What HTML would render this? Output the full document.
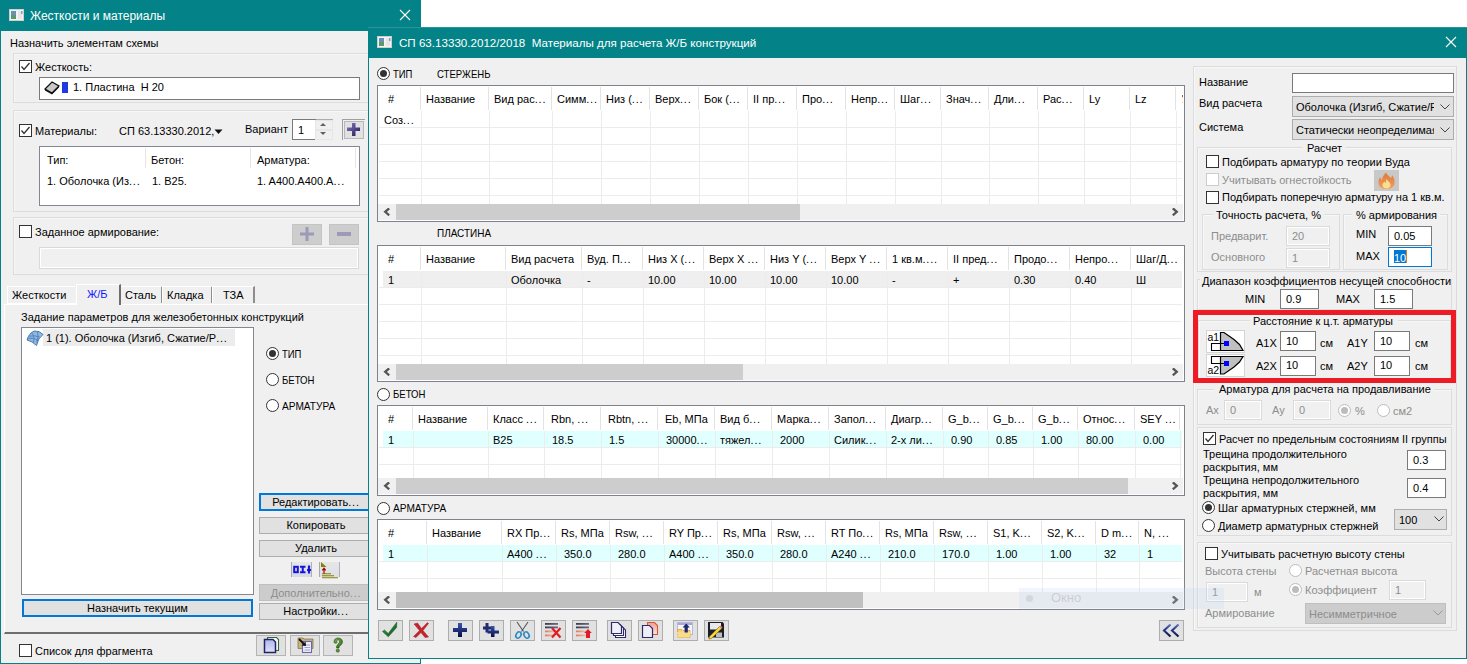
<!DOCTYPE html>
<html><head><meta charset="utf-8"><style>
html,body{margin:0;padding:0;width:1467px;height:664px;overflow:hidden;background:#fff;position:relative}
body *{position:absolute;box-sizing:content-box}
.t{font-family:"Liberation Sans", sans-serif;font-size:11px;line-height:13px;white-space:nowrap;color:#000}
.e{position:static;letter-spacing:0.8px}
.t12{font-family:"Liberation Sans", sans-serif;font-size:12px;line-height:14px;white-space:nowrap;color:#fff}
</style></head>
<body>
<div style="left:0px;top:0px;width:421px;height:664px;background:#f0f0f0"></div>
<div style="left:0px;top:0px;width:421px;height:31px;background:#038387"></div>
<div style="left:0px;top:31px;width:1px;height:633px;background:#038387"></div>
<div style="left:420px;top:31px;width:1px;height:633px;background:#038387"></div>
<div style="left:0px;top:663px;width:421px;height:1px;background:#038387"></div>
<svg style="left:9px;top:9px" width="15" height="12"><rect x="0.5" y="0.5" width="14" height="11" fill="#f4f4f4" stroke="#cfcfcf"/><rect x="2" y="2" width="5" height="8" fill="#5a9a6a"/><rect x="2" y="2" width="5" height="4" fill="#6c8fb8"/><rect x="9" y="2" width="4" height="8" fill="#e6e6e6"/><rect x="12" y="2" width="1.5" height="3" fill="#7aa0c8"/></svg>
<span class="t12" style="left:30px;top:9px">Жесткости и материалы</span>
<svg style="left:399px;top:9px" width="12" height="12"><path d="M1,1 L11,11 M11,1 L1,11" stroke="#fff" stroke-width="1.1"/></svg>
<span class="t" style="left:10px;top:37px;">Назначить элементам схемы</span>
<div style="left:13px;top:53px;width:398px;height:48px;border:1px solid #dcdcdc;box-shadow:inset 1px 1px 0 #f7f7f7"></div>
<div style="left:19px;top:60px;width:11px;height:11px;border:1px solid #333333;background:#fff"></div>
<svg style="left:19px;top:60px" width="13" height="13"><polyline points="2.5,6.5 5,9.5 10.5,3" fill="none" stroke="#333" stroke-width="1.3"/></svg>
<span class="t" style="left:35px;top:61px;">Жесткость:</span>
<div style="left:39px;top:77px;width:319px;height:21px;border:1px solid #7a7a7a;background:#fff"></div>
<svg style="left:44px;top:80px" width="17" height="16"><path d="M1,9 L8,2 L15,6 L8,13 Z" fill="#c8c8c8" stroke="#111" stroke-width="1.2"/><path d="M1,9 L1,10.5 L8,14.5 L15,7.5 L15,6 L8,13 Z" fill="#111"/></svg>
<div style="left:62px;top:82px;width:6px;height:11px;background:#1f3be0"></div>
<span class="t" style="left:73px;top:81px">1. Пластина&nbsp; H 20</span>
<div style="left:13px;top:110px;width:398px;height:100px;border:1px solid #dcdcdc;box-shadow:inset 1px 1px 0 #f7f7f7"></div>
<div style="left:19px;top:124px;width:11px;height:11px;border:1px solid #333333;background:#fff"></div>
<svg style="left:19px;top:124px" width="13" height="13"><polyline points="2.5,6.5 5,9.5 10.5,3" fill="none" stroke="#333" stroke-width="1.3"/></svg>
<span class="t" style="left:35px;top:125px;">Материалы:</span>
<span class="t" style="left:119px;top:125px;">СП 63.13330.2012,</span>
<svg style="left:214px;top:129px" width="9" height="6"><path d="M0.5,0.5 L8.5,0.5 L4.5,5 Z" fill="#111"/></svg>
<span class="t" style="left:245px;top:123px;">Вариант</span>
<div style="left:292px;top:119px;width:39px;height:19px;border:1px solid #adadad;background:#fff"></div>
<div style="left:292px;top:119px;width:23px;height:19px;border-top:1px solid #7a7a7a;border-bottom:1px solid #7a7a7a;border-left:1px solid #7a7a7a"></div>
<span class="t" style="left:298px;top:124px;">1</span>
<div style="left:315px;top:120px;width:16px;height:8px;background:#f0f0f0;border:1px solid #e6e6e6"></div>
<div style="left:315px;top:130px;width:16px;height:8px;background:#f0f0f0;border:1px solid #e6e6e6"></div>
<svg style="left:318px;top:121px" width="10" height="16"><path d="M2,5 L8,5 L5,2 Z" fill="#606060"/><path d="M2,11 L8,11 L5,14 Z" fill="#606060"/></svg>
<div style="left:342px;top:119px;width:22px;height:20px;border-left:1px solid #a0a0a0;border-top:1px solid #a0a0a0;background:#f0f0f0"></div>
<div style="left:344px;top:121px;width:18px;height:16px;border:1px solid #b8b8b8;background:#e1e1e1"></div>
<svg style="left:346px;top:122px" width="16" height="16"><defs><linearGradient id="gpp" x1="0" y1="0" x2="1" y2="1"><stop offset="0" stop-color="#8a7ac8"/><stop offset="1" stop-color="#1e1650"/></linearGradient></defs><path d="M6,1 H9.5 V5.5 H14 V9 H9.5 V14 H6 V9 H1 V5.5 H6 Z" fill="url(#gpp)"/></svg>
<div style="left:39px;top:146px;width:319px;height:58px;border:1px solid #828790;background:#fff"></div>
<div style="left:145px;top:148px;width:1px;height:20px;background:#e5e5e5"></div>
<div style="left:250px;top:148px;width:1px;height:20px;background:#e5e5e5"></div>
<div style="left:355px;top:148px;width:1px;height:20px;background:#e5e5e5"></div>
<span class="t" style="left:47px;top:154px;">Тип:</span>
<span class="t" style="left:151px;top:154px;">Бетон:</span>
<span class="t" style="left:257px;top:154px;">Арматура:</span>
<span class="t" style="left:47px;top:175px;">1. Оболочка (Из<span class="e">...</span></span>
<span class="t" style="left:152px;top:175px;">1. B25.</span>
<span class="t" style="left:257px;top:175px;">1. A400.A400.A<span class="e">...</span></span>
<div style="left:13px;top:217px;width:398px;height:56px;border:1px solid #dcdcdc;box-shadow:inset 1px 1px 0 #f7f7f7"></div>
<div style="left:19px;top:225px;width:11px;height:11px;border:1px solid #333333;background:#fff"></div>
<span class="t" style="left:35px;top:226px;">Заданное армирование:</span>
<div style="left:292px;top:224px;width:28px;height:19px;border:1px solid #c4c4c4;background:#cdcdcd"></div>
<svg style="left:300px;top:227px" width="15" height="15"><path d="M5.5,0 H8.5 V5.5 H14 V8.5 H8.5 V14 H5.5 V8.5 H0 V5.5 H5.5 Z" fill="#9c9ab6"/></svg>
<div style="left:329px;top:224px;width:28px;height:19px;border:1px solid #c4c4c4;background:#cdcdcd"></div>
<div style="left:337px;top:232px;width:14px;height:4px;background:#9c9ab6"></div>
<div style="left:39px;top:247px;width:318px;height:20px;border:1px solid #d9d9d9;box-shadow:inset 1px 1px 0 #fff,inset -1px -1px 0 #fff;background:#f0f0f0"></div>
<div style="left:4px;top:304px;width:416px;height:327px;border-top:1px solid #fff;border-left:1px solid #fff;border-bottom:2px solid #6e6e6e"></div>
<div style="left:7px;top:286px;width:67px;height:16px;border-top:1px solid #fff;border-left:1px solid #fff;border-right:0;background:#f0f0f0"></div>
<div style="left:120px;top:286px;width:40px;height:16px;border-top:1px solid #fff;border-left:1px solid #fff;border-right:2px solid #8e8e8e;background:#f0f0f0"></div>
<div style="left:162px;top:286px;width:48px;height:16px;border-top:1px solid #fff;border-left:1px solid #fff;border-right:2px solid #8e8e8e;background:#f0f0f0"></div>
<div style="left:212px;top:286px;width:40px;height:16px;border-top:1px solid #fff;border-left:1px solid #fff;border-right:2px solid #8e8e8e;background:#f0f0f0"></div>
<div style="left:76px;top:284px;width:42px;height:20px;border-top:1px solid #fff;border-left:1px solid #fff;border-right:2px solid #6e6e6e;background:#f0f0f0"></div>
<div style="left:7px;top:303px;width:69px;height:1px;background:#fff"></div>
<span class="t" style="left:12px;top:289px;">Жесткости</span>
<span class="t" style="left:87px;top:288px;color:#1515ff">Ж/Б</span>
<span class="t" style="left:125px;top:289px;">Сталь</span>
<span class="t" style="left:167px;top:289px;">Кладка</span>
<span class="t" style="left:223px;top:289px;">ТЗА</span>
<span class="t" style="left:21px;top:311px;">Задание параметров для железобетонных конструкций</span>
<div style="left:21px;top:327px;width:231px;height:266px;border:1px solid #828790;background:#fff"></div>
<div style="left:43px;top:329px;width:192px;height:17px;background:#ececec"></div>
<svg style="left:26px;top:330px" width="19" height="17"><path d="M1,10 Q3,3 8.5,1 Q14,0.8 17,4.5 Q12,8 10.5,15.5 Q6,11 1,10 Z" fill="#8cb8e2" stroke="#4a78b0" stroke-width="1"/><path d="M3.2,6.2 Q9,5 13.8,7.2 M2,8.2 Q8,7.5 12,10.5 M5.5,2.8 Q9,6 7.5,12.2 M11.5,1.5 Q13,5.5 10.8,12.8" fill="none" stroke="#4a78b0" stroke-width="0.8"/></svg>
<span class="t" style="left:46px;top:332px;">1 (1). Оболочка (Изгиб, Сжатие/Р<span class="e">...</span></span>
<div style="left:266px;top:347px;width:11px;height:11px;border:1px solid #333333;border-radius:50%;background:#fff"></div>
<div style="left:269px;top:350px;width:7px;height:7px;border-radius:50%;background:#333333"></div>
<span class="t" style="left:282px;top:348px;transform:scaleX(0.86);transform-origin:0 0">ТИП</span>
<div style="left:266px;top:373px;width:11px;height:11px;border:1px solid #333333;border-radius:50%;background:#fff"></div>
<span class="t" style="left:282px;top:374px;transform:scaleX(0.87);transform-origin:0 0">БЕТОН</span>
<div style="left:266px;top:399px;width:11px;height:11px;border:1px solid #333333;border-radius:50%;background:#fff"></div>
<span class="t" style="left:282px;top:400px;transform:scaleX(0.92);transform-origin:0 0">АРМАТУРА</span>
<div style="left:259px;top:493px;width:110px;height:14px;border:2px solid #0078d7;background:#e1e1e1"></div>
<span class="t" style="left:259px;width:114px;text-align:center;top:496px;color:#000">Редактировать<span class="e">...</span></span>
<div style="left:259px;top:517px;width:112px;height:15px;border:1px solid #adadad;background:#e1e1e1"></div>
<span class="t" style="left:259px;width:114px;text-align:center;top:519px;color:#000">Копировать</span>
<div style="left:259px;top:540px;width:112px;height:15px;border:1px solid #adadad;background:#e1e1e1"></div>
<span class="t" style="left:259px;width:114px;text-align:center;top:542px;color:#000">Удалить</span>
<div style="left:291px;top:562px;width:19px;height:15px;border-left:1px solid #a8a8a8;border-right:1px solid #b0b0b0;background:linear-gradient(#e6e6e6,#d6dae6)"></div>
<svg style="left:292px;top:565px" width="20" height="10"><rect x="2.2" y="1.8" width="3.6" height="5.4" fill="none" stroke="#1414dc" stroke-width="2"/><path d="M8,1.8 H13.5 M10.75,1.8 V7.2 M8,7.2 H13.5" stroke="#1414dc" stroke-width="2"/><path d="M17,0.5 V8.5 M15,5 H19" stroke="#1414dc" stroke-width="2.2"/></svg>
<div style="left:319px;top:562px;width:19px;height:15px;border-left:1px solid #a8a8a8;border-right:1px solid #b0b0b0;background:linear-gradient(#e6e6e6,#dde0ea)"></div>
<svg style="left:320px;top:561px" width="20" height="18"><path d="M1,1 L6.5,6 L1,6 Z" fill="#8a8000"/><path d="M2,12.8 H11 M2,14.8 H14 M2,16.8 H18" stroke="#8a8000" stroke-width="1.1"/><path d="M4,12.5 V7.5 M2.3,9.3 L4,7.3 L5.7,9.3" stroke="#a00000" stroke-width="1.2" fill="none"/></svg>
<div style="left:259px;top:584px;width:112px;height:15px;border:1px solid #bfbfbf;background:#cccccc"></div>
<span class="t" style="left:259px;width:114px;text-align:center;top:587px;color:#8d8d8d">Дополнительно<span class="e">...</span></span>
<div style="left:259px;top:603px;width:112px;height:15px;border:1px solid #adadad;background:#e1e1e1"></div>
<span class="t" style="left:259px;width:114px;text-align:center;top:605px;color:#000">Настройки<span class="e">...</span></span>
<div style="left:22px;top:599px;width:227px;height:14px;border:2px solid #0078d7;background:#e1e1e1"></div>
<span class="t" style="left:22px;width:231px;text-align:center;top:602px;color:#000">Назначить текущим</span>
<div style="left:19px;top:644px;width:11px;height:11px;border:1px solid #333333;background:#fff"></div>
<span class="t" style="left:35px;top:645px;">Список для фрагмента</span>
<div style="left:256px;top:635px;width:28px;height:19px;border:1px solid #b4b4b4;background:#e1e1e1"></div>
<div style="left:290px;top:635px;width:28px;height:19px;border:1px solid #b4b4b4;background:#e1e1e1"></div>
<div style="left:323px;top:635px;width:28px;height:19px;border:1px solid #b4b4b4;background:#e1e1e1"></div>
<svg style="left:257px;top:636px" width="28" height="19"><defs><linearGradient id="gdoc" x1="0" y1="0" x2="0" y2="1"><stop offset="0" stop-color="#b0b8ea"/><stop offset="1" stop-color="#dfe2f6"/></linearGradient></defs><path d="M10.5,1.5 H19.5 L21.5,3.5 V14.5 H10.5 Z" fill="#fff" stroke="#2f6a2f" stroke-width="1.1"/><path d="M7.5,3.5 H16 L18.5,6 V16.5 H7.5 Z" fill="url(#gdoc)" stroke="#23236a" stroke-width="1.5"/></svg>
<svg style="left:291px;top:636px" width="28" height="19"><path d="M7,2 H12 L13,3 H22 V12.5 H7 Z" fill="#c9b27a" stroke="#7a6a40" stroke-width="0.7"/><rect x="11.5" y="5.5" width="9" height="11" fill="#eeeefa" stroke="#6a6aa8" stroke-width="1.1"/><path d="M13.5,9 H19 M13.5,11.5 H19 M13.5,14 H19" stroke="#8a8ac8" stroke-width="0.8"/><path d="M8,3 L14,9" stroke="#111" stroke-width="1.8"/><path d="M15,10 L10.5,9.5 L14.5,5.5 Z" fill="#111"/></svg>
<svg style="left:324px;top:636px" width="28" height="19"><defs><radialGradient id="gq" cx="0.4" cy="0.3" r="0.8"><stop offset="0" stop-color="#7ab850"/><stop offset="1" stop-color="#2a5e14"/></radialGradient></defs><path d="M10,6 C10,3 12,2 14,2 C17,2 18.5,3.8 18.5,6 C18.5,8.5 16,9.5 15.2,10.8 L15,12 L12.5,12 L12.6,10.5 C13,8.5 15.5,7.5 15.5,5.8 C15.5,4.5 14.8,3.8 14,3.8 C13,3.8 12.7,4.6 12.8,5.6 C13.3,6 13.2,7.2 12,7.3 C10.7,7.3 10,6.8 10,6 Z" fill="url(#gq)" stroke="#2a5414" stroke-width="0.6"/><circle cx="13.8" cy="14.6" r="1.6" fill="#5a9a30" stroke="#2a5414" stroke-width="0.6"/></svg>
<div style="left:368px;top:27px;width:1099px;height:632px;background:#f0f0f0"></div>
<div style="left:368px;top:27px;width:1099px;height:31px;background:#038387"></div>
<div style="left:368px;top:27px;width:1099px;height:1px;background:#2a9396"></div>
<div style="left:368px;top:58px;width:1px;height:601px;background:#038387"></div>
<div style="left:1466px;top:58px;width:1px;height:601px;background:#038387"></div>
<div style="left:368px;top:658px;width:1099px;height:1px;background:#038387"></div>
<svg style="left:377px;top:36px" width="15" height="12"><rect x="0.5" y="0.5" width="14" height="11" fill="#f4f4f4" stroke="#cfcfcf"/><rect x="2" y="2" width="5" height="8" fill="#5a9a6a"/><rect x="2" y="2" width="5" height="4" fill="#6c8fb8"/><rect x="9" y="2" width="4" height="8" fill="#e6e6e6"/><rect x="12" y="2" width="1.5" height="3" fill="#7aa0c8"/></svg>
<span class="t12" style="left:399px;top:36px;font-size:11.6px">СП 63.13330.2012/2018&nbsp; Материалы для расчета Ж/Б конструкций</span>
<svg style="left:1445px;top:36px" width="12" height="12"><path d="M1,1 L11,11 M11,1 L1,11" stroke="#fff" stroke-width="1.1"/></svg>
<div style="left:377px;top:67px;width:11px;height:11px;border:1px solid #333333;border-radius:50%;background:#fff"></div>
<div style="left:380px;top:70px;width:7px;height:7px;border-radius:50%;background:#333333"></div>
<span class="t" style="left:393px;top:68px;transform:scaleX(0.86);transform-origin:0 0">ТИП</span>
<span class="t" style="left:437px;top:68px;transform:scaleX(0.87);transform-origin:0 0">СТЕРЖЕНЬ</span>
<div style="left:377px;top:85px;width:806px;height:135px;border:1px solid #7f848c;background:#fff;overflow:hidden">
<div style="left:42px;top:1px;width:1px;height:23px;background:#e3e3e3"></div>
<div style="left:110px;top:1px;width:1px;height:23px;background:#e3e3e3"></div>
<div style="left:173px;top:1px;width:1px;height:23px;background:#e3e3e3"></div>
<div style="left:222px;top:1px;width:1px;height:23px;background:#e3e3e3"></div>
<div style="left:271px;top:1px;width:1px;height:23px;background:#e3e3e3"></div>
<div style="left:320px;top:1px;width:1px;height:23px;background:#e3e3e3"></div>
<div style="left:369px;top:1px;width:1px;height:23px;background:#e3e3e3"></div>
<div style="left:418px;top:1px;width:1px;height:23px;background:#e3e3e3"></div>
<div style="left:467px;top:1px;width:1px;height:23px;background:#e3e3e3"></div>
<div style="left:516px;top:1px;width:1px;height:23px;background:#e3e3e3"></div>
<div style="left:562px;top:1px;width:1px;height:23px;background:#e3e3e3"></div>
<div style="left:610px;top:1px;width:1px;height:23px;background:#e3e3e3"></div>
<div style="left:659px;top:1px;width:1px;height:23px;background:#e3e3e3"></div>
<div style="left:705px;top:1px;width:1px;height:23px;background:#e3e3e3"></div>
<div style="left:751px;top:1px;width:1px;height:23px;background:#e3e3e3"></div>
<div style="left:797px;top:1px;width:1px;height:23px;background:#e3e3e3"></div>
<div style="left:1px;top:41px;width:803px;height:1px;background:#ececec"></div>
<div style="left:1px;top:58px;width:803px;height:1px;background:#ececec"></div>
<div style="left:1px;top:75px;width:803px;height:1px;background:#ececec"></div>
<div style="left:1px;top:92px;width:803px;height:1px;background:#ececec"></div>
<div style="left:1px;top:109px;width:803px;height:1px;background:#ececec"></div>
<div style="left:43px;top:25px;width:1px;height:93px;background:#ececec"></div>
<div style="left:111px;top:25px;width:1px;height:93px;background:#ececec"></div>
<div style="left:174px;top:25px;width:1px;height:93px;background:#ececec"></div>
<div style="left:223px;top:25px;width:1px;height:93px;background:#ececec"></div>
<div style="left:272px;top:25px;width:1px;height:93px;background:#ececec"></div>
<div style="left:321px;top:25px;width:1px;height:93px;background:#ececec"></div>
<div style="left:370px;top:25px;width:1px;height:93px;background:#ececec"></div>
<div style="left:419px;top:25px;width:1px;height:93px;background:#ececec"></div>
<div style="left:468px;top:25px;width:1px;height:93px;background:#ececec"></div>
<div style="left:517px;top:25px;width:1px;height:93px;background:#ececec"></div>
<div style="left:563px;top:25px;width:1px;height:93px;background:#ececec"></div>
<div style="left:611px;top:25px;width:1px;height:93px;background:#ececec"></div>
<div style="left:660px;top:25px;width:1px;height:93px;background:#ececec"></div>
<div style="left:706px;top:25px;width:1px;height:93px;background:#ececec"></div>
<div style="left:752px;top:25px;width:1px;height:93px;background:#ececec"></div>
<div style="left:798px;top:25px;width:1px;height:93px;background:#ececec"></div>
<span class="t" style="left:10px;top:7px">#</span>
<span class="t" style="left:48px;top:7px">Название</span>
<span class="t" style="left:116px;top:7px">Вид рас<span class="e">...</span></span>
<span class="t" style="left:179px;top:7px">Симм<span class="e">...</span></span>
<span class="t" style="left:228px;top:7px">Низ (<span class="e">...</span></span>
<span class="t" style="left:277px;top:7px">Верх<span class="e">...</span></span>
<span class="t" style="left:326px;top:7px">Бок (<span class="e">...</span></span>
<span class="t" style="left:375px;top:7px">II пр<span class="e">...</span></span>
<span class="t" style="left:424px;top:7px">Про<span class="e">...</span></span>
<span class="t" style="left:473px;top:7px">Непр<span class="e">...</span></span>
<span class="t" style="left:522px;top:7px">Шаг<span class="e">...</span></span>
<span class="t" style="left:568px;top:7px">Знач<span class="e">...</span></span>
<span class="t" style="left:616px;top:7px">Дли<span class="e">...</span></span>
<span class="t" style="left:665px;top:7px">Рас<span class="e">...</span></span>
<span class="t" style="left:711px;top:7px">Ly</span>
<span class="t" style="left:757px;top:7px">Lz</span>
<span class="t" style="left:6px;top:28px">Соз<span class="e">...</span></span>
<div style="left:0px;top:118px;width:805px;height:16px;background:#f0f0f0"></div>
<div style="left:18px;top:118px;width:404px;height:16px;background:#cdcdcd"></div>
<svg style="left:5px;top:122px" width="8" height="8"><path d="M6.2,0.3 L2.2,3.8 L6.2,7.3" fill="none" stroke="#555" stroke-width="2.3" stroke-linejoin="miter"/></svg>
<svg style="left:793px;top:122px" width="8" height="8"><path d="M1.8,0.3 L5.8,3.8 L1.8,7.3" fill="none" stroke="#555" stroke-width="2.3" stroke-linejoin="miter"/></svg>
</div>
<div style="left:1182px;top:95px;width:1px;height:2px;background:#b0601c"></div>
<div style="left:1182px;top:97px;width:1px;height:1px;background:#f8d8a0"></div>
<div style="left:1182px;top:102px;width:1px;height:1px;background:#f4c890"></div>
<span class="t" style="left:437px;top:227px;transform:scaleX(0.905);transform-origin:0 0">ПЛАСТИНА</span>
<div style="left:377px;top:245px;width:806px;height:135px;border:1px solid #7f848c;background:#fff;overflow:hidden">
<div style="left:42px;top:1px;width:1px;height:23px;background:#e3e3e3"></div>
<div style="left:127px;top:1px;width:1px;height:23px;background:#e3e3e3"></div>
<div style="left:203px;top:1px;width:1px;height:23px;background:#e3e3e3"></div>
<div style="left:264px;top:1px;width:1px;height:23px;background:#e3e3e3"></div>
<div style="left:325px;top:1px;width:1px;height:23px;background:#e3e3e3"></div>
<div style="left:386px;top:1px;width:1px;height:23px;background:#e3e3e3"></div>
<div style="left:447px;top:1px;width:1px;height:23px;background:#e3e3e3"></div>
<div style="left:508px;top:1px;width:1px;height:23px;background:#e3e3e3"></div>
<div style="left:569px;top:1px;width:1px;height:23px;background:#e3e3e3"></div>
<div style="left:630px;top:1px;width:1px;height:23px;background:#e3e3e3"></div>
<div style="left:691px;top:1px;width:1px;height:23px;background:#e3e3e3"></div>
<div style="left:752px;top:1px;width:1px;height:23px;background:#e3e3e3"></div>
<div style="left:5px;top:25px;width:799px;height:16px;background:#efefef"></div>
<div style="left:1px;top:41px;width:803px;height:1px;background:#ececec"></div>
<div style="left:1px;top:58px;width:803px;height:1px;background:#ececec"></div>
<div style="left:1px;top:75px;width:803px;height:1px;background:#ececec"></div>
<div style="left:1px;top:92px;width:803px;height:1px;background:#ececec"></div>
<div style="left:1px;top:109px;width:803px;height:1px;background:#ececec"></div>
<div style="left:43px;top:25px;width:1px;height:93px;background:#ececec"></div>
<div style="left:128px;top:25px;width:1px;height:93px;background:#ececec"></div>
<div style="left:204px;top:25px;width:1px;height:93px;background:#ececec"></div>
<div style="left:265px;top:25px;width:1px;height:93px;background:#ececec"></div>
<div style="left:326px;top:25px;width:1px;height:93px;background:#ececec"></div>
<div style="left:387px;top:25px;width:1px;height:93px;background:#ececec"></div>
<div style="left:448px;top:25px;width:1px;height:93px;background:#ececec"></div>
<div style="left:509px;top:25px;width:1px;height:93px;background:#ececec"></div>
<div style="left:570px;top:25px;width:1px;height:93px;background:#ececec"></div>
<div style="left:631px;top:25px;width:1px;height:93px;background:#ececec"></div>
<div style="left:692px;top:25px;width:1px;height:93px;background:#ececec"></div>
<div style="left:753px;top:25px;width:1px;height:93px;background:#ececec"></div>
<span class="t" style="left:10px;top:7px">#</span>
<span class="t" style="left:48px;top:7px">Название</span>
<span class="t" style="left:133px;top:7px">Вид расчета</span>
<span class="t" style="left:209px;top:7px">Вуд. П<span class="e">...</span></span>
<span class="t" style="left:270px;top:7px">Низ X (<span class="e">...</span></span>
<span class="t" style="left:331px;top:7px">Верх X <span class="e">...</span></span>
<span class="t" style="left:392px;top:7px">Низ Y (<span class="e">...</span></span>
<span class="t" style="left:453px;top:7px">Верх Y <span class="e">...</span></span>
<span class="t" style="left:514px;top:7px">1 кв.м<span class="e">...</span>.</span>
<span class="t" style="left:575px;top:7px">II пред<span class="e">...</span></span>
<span class="t" style="left:636px;top:7px">Продо<span class="e">...</span></span>
<span class="t" style="left:697px;top:7px">Непро<span class="e">...</span></span>
<span class="t" style="left:758px;top:7px">Шаг/Д<span class="e">...</span></span>
<span class="t" style="left:10px;top:28px">1</span>
<span class="t" style="left:133px;top:28px">Оболочка</span>
<span class="t" style="left:209px;top:28px">-</span>
<span class="t" style="left:270px;top:28px">10.00</span>
<span class="t" style="left:331px;top:28px">10.00</span>
<span class="t" style="left:392px;top:28px">10.00</span>
<span class="t" style="left:453px;top:28px">10.00</span>
<span class="t" style="left:514px;top:28px">-</span>
<span class="t" style="left:575px;top:28px">+</span>
<span class="t" style="left:636px;top:28px">0.30</span>
<span class="t" style="left:697px;top:28px">0.40</span>
<span class="t" style="left:758px;top:28px">Ш</span>
<div style="left:0px;top:118px;width:805px;height:16px;background:#f0f0f0"></div>
<div style="left:18px;top:118px;width:347px;height:16px;background:#cdcdcd"></div>
<svg style="left:5px;top:122px" width="8" height="8"><path d="M6.2,0.3 L2.2,3.8 L6.2,7.3" fill="none" stroke="#555" stroke-width="2.3" stroke-linejoin="miter"/></svg>
<svg style="left:793px;top:122px" width="8" height="8"><path d="M1.8,0.3 L5.8,3.8 L1.8,7.3" fill="none" stroke="#555" stroke-width="2.3" stroke-linejoin="miter"/></svg>
</div>
<div style="left:377px;top:388px;width:11px;height:11px;border:1px solid #333333;border-radius:50%;background:#fff"></div>
<span class="t" style="left:393px;top:388px;transform:scaleX(0.87);transform-origin:0 0">БЕТОН</span>
<div style="left:377px;top:405px;width:806px;height:89px;border:1px solid #7f848c;background:#fff;overflow:hidden">
<div style="left:34px;top:1px;width:1px;height:23px;background:#e3e3e3"></div>
<div style="left:109px;top:1px;width:1px;height:23px;background:#e3e3e3"></div>
<div style="left:165px;top:1px;width:1px;height:23px;background:#e3e3e3"></div>
<div style="left:222px;top:1px;width:1px;height:23px;background:#e3e3e3"></div>
<div style="left:279px;top:1px;width:1px;height:23px;background:#e3e3e3"></div>
<div style="left:336px;top:1px;width:1px;height:23px;background:#e3e3e3"></div>
<div style="left:393px;top:1px;width:1px;height:23px;background:#e3e3e3"></div>
<div style="left:450px;top:1px;width:1px;height:23px;background:#e3e3e3"></div>
<div style="left:507px;top:1px;width:1px;height:23px;background:#e3e3e3"></div>
<div style="left:564px;top:1px;width:1px;height:23px;background:#e3e3e3"></div>
<div style="left:609px;top:1px;width:1px;height:23px;background:#e3e3e3"></div>
<div style="left:654px;top:1px;width:1px;height:23px;background:#e3e3e3"></div>
<div style="left:699px;top:1px;width:1px;height:23px;background:#e3e3e3"></div>
<div style="left:756px;top:1px;width:1px;height:23px;background:#e3e3e3"></div>
<div style="left:801px;top:1px;width:1px;height:23px;background:#e3e3e3"></div>
<div style="left:5px;top:25px;width:799px;height:16px;background:#e0ffff"></div>
<div style="left:1px;top:41px;width:803px;height:1px;background:#ececec"></div>
<div style="left:1px;top:58px;width:803px;height:1px;background:#ececec"></div>
<div style="left:35px;top:25px;width:1px;height:47px;background:#ececec"></div>
<div style="left:110px;top:25px;width:1px;height:47px;background:#ececec"></div>
<div style="left:166px;top:25px;width:1px;height:47px;background:#ececec"></div>
<div style="left:223px;top:25px;width:1px;height:47px;background:#ececec"></div>
<div style="left:280px;top:25px;width:1px;height:47px;background:#ececec"></div>
<div style="left:337px;top:25px;width:1px;height:47px;background:#ececec"></div>
<div style="left:394px;top:25px;width:1px;height:47px;background:#ececec"></div>
<div style="left:451px;top:25px;width:1px;height:47px;background:#ececec"></div>
<div style="left:508px;top:25px;width:1px;height:47px;background:#ececec"></div>
<div style="left:565px;top:25px;width:1px;height:47px;background:#ececec"></div>
<div style="left:610px;top:25px;width:1px;height:47px;background:#ececec"></div>
<div style="left:655px;top:25px;width:1px;height:47px;background:#ececec"></div>
<div style="left:700px;top:25px;width:1px;height:47px;background:#ececec"></div>
<div style="left:757px;top:25px;width:1px;height:47px;background:#ececec"></div>
<div style="left:802px;top:25px;width:1px;height:47px;background:#ececec"></div>
<span class="t" style="left:10px;top:7px">#</span>
<span class="t" style="left:40px;top:7px">Название</span>
<span class="t" style="left:115px;top:7px">Класс <span class="e">...</span></span>
<span class="t" style="left:173px;top:7px">Rbn, <span class="e">...</span></span>
<span class="t" style="left:230px;top:7px">Rbtn, <span class="e">...</span></span>
<span class="t" style="left:287px;top:7px">Eb, МПа</span>
<span class="t" style="left:342px;top:7px">Вид б<span class="e">...</span></span>
<span class="t" style="left:399px;top:7px">Марка<span class="e">...</span></span>
<span class="t" style="left:456px;top:7px">Запол<span class="e">...</span></span>
<span class="t" style="left:513px;top:7px">Диагр<span class="e">...</span></span>
<span class="t" style="left:570px;top:7px">G_b<span class="e">...</span></span>
<span class="t" style="left:615px;top:7px">G_b<span class="e">...</span></span>
<span class="t" style="left:660px;top:7px">G_b<span class="e">...</span></span>
<span class="t" style="left:705px;top:7px">Относ<span class="e">...</span></span>
<span class="t" style="left:762px;top:7px">SEY <span class="e">...</span></span>
<span class="t" style="left:10px;top:28px">1</span>
<span class="t" style="left:115px;top:28px">B25</span>
<span class="t" style="left:174px;top:28px">18.5</span>
<span class="t" style="left:231px;top:28px">1.5</span>
<span class="t" style="left:288px;top:28px">30000<span class="e">...</span></span>
<span class="t" style="left:342px;top:28px">тяжел<span class="e">...</span></span>
<span class="t" style="left:402px;top:28px">2000</span>
<span class="t" style="left:456px;top:28px">Силик<span class="e">...</span></span>
<span class="t" style="left:513px;top:28px">2-х ли<span class="e">...</span></span>
<span class="t" style="left:573px;top:28px">0.90</span>
<span class="t" style="left:618px;top:28px">0.85</span>
<span class="t" style="left:663px;top:28px">1.00</span>
<span class="t" style="left:708px;top:28px">80.00</span>
<span class="t" style="left:765px;top:28px">0.00</span>
<div style="left:0px;top:72px;width:805px;height:16px;background:#f0f0f0"></div>
<div style="left:18px;top:72px;width:732px;height:16px;background:#cdcdcd"></div>
<svg style="left:5px;top:76px" width="8" height="8"><path d="M6.2,0.3 L2.2,3.8 L6.2,7.3" fill="none" stroke="#555" stroke-width="2.3" stroke-linejoin="miter"/></svg>
<svg style="left:793px;top:76px" width="8" height="8"><path d="M1.8,0.3 L5.8,3.8 L1.8,7.3" fill="none" stroke="#555" stroke-width="2.3" stroke-linejoin="miter"/></svg>
</div>
<div style="left:377px;top:502px;width:11px;height:11px;border:1px solid #333333;border-radius:50%;background:#fff"></div>
<span class="t" style="left:393px;top:502px;transform:scaleX(0.92);transform-origin:0 0">АРМАТУРА</span>
<div style="left:377px;top:519px;width:806px;height:89px;border:1px solid #7f848c;background:#fff;overflow:hidden">
<div style="left:48px;top:1px;width:1px;height:23px;background:#e3e3e3"></div>
<div style="left:123px;top:1px;width:1px;height:23px;background:#e3e3e3"></div>
<div style="left:177px;top:1px;width:1px;height:23px;background:#e3e3e3"></div>
<div style="left:231px;top:1px;width:1px;height:23px;background:#e3e3e3"></div>
<div style="left:285px;top:1px;width:1px;height:23px;background:#e3e3e3"></div>
<div style="left:339px;top:1px;width:1px;height:23px;background:#e3e3e3"></div>
<div style="left:393px;top:1px;width:1px;height:23px;background:#e3e3e3"></div>
<div style="left:447px;top:1px;width:1px;height:23px;background:#e3e3e3"></div>
<div style="left:501px;top:1px;width:1px;height:23px;background:#e3e3e3"></div>
<div style="left:555px;top:1px;width:1px;height:23px;background:#e3e3e3"></div>
<div style="left:609px;top:1px;width:1px;height:23px;background:#e3e3e3"></div>
<div style="left:663px;top:1px;width:1px;height:23px;background:#e3e3e3"></div>
<div style="left:717px;top:1px;width:1px;height:23px;background:#e3e3e3"></div>
<div style="left:760px;top:1px;width:1px;height:23px;background:#e3e3e3"></div>
<div style="left:5px;top:25px;width:799px;height:16px;background:#e0ffff"></div>
<div style="left:1px;top:41px;width:803px;height:1px;background:#ececec"></div>
<div style="left:1px;top:58px;width:803px;height:1px;background:#ececec"></div>
<div style="left:49px;top:25px;width:1px;height:47px;background:#ececec"></div>
<div style="left:124px;top:25px;width:1px;height:47px;background:#ececec"></div>
<div style="left:178px;top:25px;width:1px;height:47px;background:#ececec"></div>
<div style="left:232px;top:25px;width:1px;height:47px;background:#ececec"></div>
<div style="left:286px;top:25px;width:1px;height:47px;background:#ececec"></div>
<div style="left:340px;top:25px;width:1px;height:47px;background:#ececec"></div>
<div style="left:394px;top:25px;width:1px;height:47px;background:#ececec"></div>
<div style="left:448px;top:25px;width:1px;height:47px;background:#ececec"></div>
<div style="left:502px;top:25px;width:1px;height:47px;background:#ececec"></div>
<div style="left:556px;top:25px;width:1px;height:47px;background:#ececec"></div>
<div style="left:610px;top:25px;width:1px;height:47px;background:#ececec"></div>
<div style="left:664px;top:25px;width:1px;height:47px;background:#ececec"></div>
<div style="left:718px;top:25px;width:1px;height:47px;background:#ececec"></div>
<div style="left:761px;top:25px;width:1px;height:47px;background:#ececec"></div>
<span class="t" style="left:10px;top:7px">#</span>
<span class="t" style="left:54px;top:7px">Название</span>
<span class="t" style="left:129px;top:7px">RX Пр<span class="e">...</span></span>
<span class="t" style="left:183px;top:7px">Rs, МПа</span>
<span class="t" style="left:237px;top:7px">Rsw, <span class="e">...</span></span>
<span class="t" style="left:291px;top:7px">RY Пр<span class="e">...</span></span>
<span class="t" style="left:345px;top:7px">Rs, МПа</span>
<span class="t" style="left:399px;top:7px">Rsw, <span class="e">...</span></span>
<span class="t" style="left:453px;top:7px">RT По<span class="e">...</span></span>
<span class="t" style="left:507px;top:7px">Rs, МПа</span>
<span class="t" style="left:561px;top:7px">Rsw, <span class="e">...</span></span>
<span class="t" style="left:615px;top:7px">S1, K<span class="e">...</span></span>
<span class="t" style="left:669px;top:7px">S2, K<span class="e">...</span></span>
<span class="t" style="left:723px;top:7px">D m<span class="e">...</span></span>
<span class="t" style="left:766px;top:7px">N, <span class="e">...</span></span>
<span class="t" style="left:10px;top:28px">1</span>
<span class="t" style="left:129px;top:28px">A400 <span class="e">...</span></span>
<span class="t" style="left:186px;top:28px">350.0</span>
<span class="t" style="left:240px;top:28px">280.0</span>
<span class="t" style="left:291px;top:28px">A400 <span class="e">...</span></span>
<span class="t" style="left:348px;top:28px">350.0</span>
<span class="t" style="left:402px;top:28px">280.0</span>
<span class="t" style="left:453px;top:28px">A240 <span class="e">...</span></span>
<span class="t" style="left:510px;top:28px">210.0</span>
<span class="t" style="left:564px;top:28px">170.0</span>
<span class="t" style="left:618px;top:28px">1.00</span>
<span class="t" style="left:672px;top:28px">1.00</span>
<span class="t" style="left:726px;top:28px">32</span>
<span class="t" style="left:769px;top:28px">1</span>
<div style="left:0px;top:72px;width:805px;height:16px;background:#f0f0f0"></div>
<div style="left:18px;top:72px;width:467px;height:16px;background:#c0c0c0"></div>
<svg style="left:5px;top:76px" width="8" height="8"><path d="M6.2,0.3 L2.2,3.8 L6.2,7.3" fill="none" stroke="#555" stroke-width="2.3" stroke-linejoin="miter"/></svg>
<svg style="left:793px;top:76px" width="8" height="8"><path d="M1.8,0.3 L5.8,3.8 L1.8,7.3" fill="none" stroke="#555" stroke-width="2.3" stroke-linejoin="miter"/></svg>
</div>
<div style="left:378px;top:620px;width:23px;height:19px;border:1px solid #adadad;background:#e1e1e1"></div>
<div style="left:409px;top:620px;width:23px;height:19px;border:1px solid #adadad;background:#e1e1e1"></div>
<div style="left:448px;top:620px;width:23px;height:19px;border:1px solid #adadad;background:#e1e1e1"></div>
<div style="left:479px;top:620px;width:23px;height:19px;border:1px solid #adadad;background:#e1e1e1"></div>
<div style="left:510px;top:620px;width:23px;height:19px;border:1px solid #adadad;background:#e1e1e1"></div>
<div style="left:541px;top:620px;width:23px;height:19px;border:1px solid #adadad;background:#e1e1e1"></div>
<div style="left:572px;top:620px;width:23px;height:19px;border:1px solid #adadad;background:#e1e1e1"></div>
<div style="left:607px;top:620px;width:23px;height:19px;border:1px solid #adadad;background:#e1e1e1"></div>
<div style="left:638px;top:620px;width:23px;height:19px;border:1px solid #adadad;background:#e1e1e1"></div>
<div style="left:673px;top:620px;width:23px;height:19px;border:1px solid #adadad;background:#e1e1e1"></div>
<div style="left:704px;top:620px;width:23px;height:19px;border:1px solid #adadad;background:#e1e1e1"></div>
<svg style="left:378px;top:620px" width="25" height="21"><defs><linearGradient id="gck" x1="0" y1="0" x2="1" y2="1"><stop offset="0" stop-color="#3d9a4a"/><stop offset="1" stop-color="#0d5a1c"/></linearGradient></defs><path d="M4.5,11.5 L6.5,10 L10.2,13.5 L18.8,2.2 L18.6,7.5 L10.3,16.8 Z" fill="url(#gck)" stroke="#0b4d18" stroke-width="0.5"/></svg>
<svg style="left:409px;top:620px" width="25" height="21"><path d="M5,4 L8.5,3 L12.5,8.5 L18.5,2.5 L19.5,3.5 L14,10.5 L19.5,17 L16,17.5 L12,12.5 L7,17.5 L4.5,16.5 L10.5,10.5 Z" fill="#c8232c" stroke="#9e1a20" stroke-width="0.5"/></svg>
<svg style="left:448px;top:620px" width="25" height="21"><defs><linearGradient id="gpl" x1="0" y1="0" x2="0" y2="1"><stop offset="0" stop-color="#3556b0"/><stop offset="1" stop-color="#0b0b45"/></linearGradient></defs><path d="M10,3 H14 V8 H19 V12 H14 V17 H10 V12 H5 V8 H10 Z" fill="url(#gpl)"/></svg>
<svg style="left:479px;top:620px" width="25" height="21"><path d="M6.5,3 H9.5 V6.5 H12.5 V9.5 H9.5 V12.5 H6.5 V9.5 H4 V6.5 H6.5 Z" fill="#262a6e"/><path d="M12,6 H15.5 V10.5 H20 V13.5 H15.5 V17 H12 V13.5 H8.5 V10.5 H12 Z" fill="url(#gpl)"/></svg>
<svg style="left:510px;top:620px" width="25" height="21"><path d="M7,2 L13.5,11.5 M18,2 L11.5,11.5" stroke="#555" stroke-width="1.1"/><ellipse cx="8.5" cy="15" rx="2.4" ry="3.3" transform="rotate(30 8.5 15)" fill="none" stroke="#2a8ac8" stroke-width="1.6"/><ellipse cx="16.5" cy="15" rx="2.4" ry="3.3" transform="rotate(-30 16.5 15)" fill="none" stroke="#2a8ac8" stroke-width="1.6"/></svg>
<svg style="left:541px;top:620px" width="25" height="21"><defs><linearGradient id="gdl" x1="0" y1="0" x2="1" y2="0"><stop offset="0" stop-color="#3a3a50"/><stop offset="1" stop-color="#6a6a80"/></linearGradient><linearGradient id="grl" x1="0" y1="0" x2="1" y2="0"><stop offset="0" stop-color="#e07a60"/><stop offset="1" stop-color="#f0c0b0"/></linearGradient></defs><rect x="4" y="3" width="13" height="1.8" fill="url(#gdl)"/><rect x="4" y="6.5" width="13" height="1.8" fill="url(#gdl)"/><rect x="4" y="10.5" width="10" height="1.8" fill="url(#grl)"/><rect x="4" y="14.5" width="10" height="1.8" fill="url(#grl)"/><path d="M11,8 L19.5,17.5 M19.5,8 L11,17.5" stroke="#e01b24" stroke-width="2.2"/></svg>
<svg style="left:572px;top:620px" width="25" height="21"><rect x="4" y="3" width="13" height="1.8" fill="url(#gdl)"/><rect x="4" y="6.5" width="13" height="1.8" fill="url(#gdl)"/><rect x="4" y="10.5" width="10" height="1.8" fill="url(#grl)"/><rect x="4" y="14.5" width="10" height="1.8" fill="url(#grl)"/><path d="M16,9 L19.8,13 H18 V18 H14 V13 H12.2 Z" fill="#e01b24"/></svg>
<svg style="left:607px;top:620px" width="25" height="21"><path d="M8.5,6.5 H15 L18.5,10 V17.5 H8.5 Z" fill="#fff" stroke="#2d2a6a" stroke-width="1.1"/><path d="M6.5,4.5 H13 L16.5,8 V15.5 H6.5 Z" fill="#fff" stroke="#2d2a6a" stroke-width="1.1"/><path d="M4.5,2.5 H11 L14.5,6 V13.5 H4.5 Z" fill="#f0f0f8" stroke="#2d2a6a" stroke-width="1.2"/></svg>
<svg style="left:638px;top:620px" width="25" height="21"><defs><linearGradient id="gpk" x1="0" y1="0" x2="0" y2="1"><stop offset="0" stop-color="#f0a090"/><stop offset="1" stop-color="#fbe4dc"/></linearGradient></defs><path d="M9.5,2.5 H16.5 L19.5,5.5 V14.5 H9.5 Z" fill="url(#gpk)" stroke="#d05a38" stroke-width="1.1"/><path d="M4.5,5.5 H11.5 L14.5,8.5 V17.5 H4.5 Z" fill="#eeeef6" stroke="#2d2a6a" stroke-width="1.2"/></svg>
<svg style="left:673px;top:620px" width="25" height="21"><rect x="4.5" y="2.5" width="15" height="12" fill="#f4f4fa" stroke="#b8b8d8"/><rect x="5" y="3" width="14" height="2" fill="#a8a8d8"/><path d="M4.5,9.5 H9 L10,10.5 H17 V17.5 H5 Z" fill="#f6d37a" stroke="#d4a040" stroke-width="0.8"/><path d="M4,12 H18 L16.5,17.5 H5 Z" fill="#f8dc8c"/><path d="M13.2,3.5 L16.8,7.5 H14.8 V12.5 H11.6 V7.5 H9.6 Z" fill="#1c2a6a"/></svg>
<svg style="left:704px;top:620px" width="25" height="21"><path d="M4,2 H18.5 L20,3.5 V17.5 H4 Z" fill="#1d1e28"/><rect x="6" y="3" width="11" height="6.5" fill="#e8e8f0"/><rect x="12" y="12.5" width="6" height="4.5" fill="#bdbdbd"/><path d="M5.5,16.5 L15.5,6.5 L17.5,8.5 L7.5,18.5 L5,19 Z" fill="#f2d640" stroke="#8a6a10" stroke-width="0.7"/><path d="M15.5,6.5 L16.5,5.5 L18.5,7.5 L17.5,8.5 Z" fill="#e87a7a"/></svg>
<div style="left:1159px;top:620px;width:23px;height:19px;border:1px solid #adadad;background:#e1e1e1"></div>
<svg style="left:1160px;top:622px" width="22" height="18"><defs><linearGradient id="gchev" x1="0" y1="0" x2="0" y2="1"><stop offset="0" stop-color="#6070b8"/><stop offset="0.4" stop-color="#283890"/><stop offset="1" stop-color="#141838"/></linearGradient></defs><path d="M10.5,2.5 L4,8.5 L10.5,14.5 M18.5,2.5 L12,8.5 L18.5,14.5" fill="none" stroke="url(#gchev)" stroke-width="2.1"/></svg>
<div style="left:1193px;top:66px;width:262px;height:563px;border:1px solid #dcdcdc;box-shadow:inset 1px 1px 0 #f7f7f7"></div>
<span class="t" style="left:1199px;top:76px;">Название</span>
<span class="t" style="left:1199px;top:97px;">Вид расчета</span>
<span class="t" style="left:1199px;top:121px;">Система</span>
<div style="left:1292px;top:73px;width:160px;height:18px;border:1px solid #7a7a7a;background:#fff"></div>
<div style="left:1292px;top:96px;width:160px;height:19px;border:1px solid #adadad;background:#e1e1e1"></div>
<div style="left:1292px;top:119px;width:160px;height:19px;border:1px solid #adadad;background:#e1e1e1"></div>
<div style="left:1296px;top:101px;width:138px;height:14px;overflow:hidden"><span class="t" style="left:0;top:0">Оболочка (Изгиб, Сжатие/Растяжение)</span></div>
<div style="left:1296px;top:124px;width:138px;height:14px;overflow:hidden"><span class="t" style="left:0;top:0">Статически неопределимая</span></div>
<svg style="left:1440px;top:104px" width="10" height="6"><path d="M0.5,0.5 L5,5 L9.5,0.5" fill="none" stroke="#444" stroke-width="1"/></svg>
<svg style="left:1440px;top:127px" width="10" height="6"><path d="M0.5,0.5 L5,5 L9.5,0.5" fill="none" stroke="#444" stroke-width="1"/></svg>
<div style="left:1197px;top:147px;width:253px;height:123px;border:1px solid #dcdcdc;box-shadow:inset 1px 1px 0 #f7f7f7"></div>
<div style="left:1303px;top:143px;width:42px;height:12px;background:#f0f0f0"></div>
<span class="t" style="left:1307px;top:142px;">Расчет</span>
<div style="left:1206px;top:155px;width:11px;height:11px;border:1px solid #333333;background:#fff"></div>
<span class="t" style="left:1222px;top:156px;">Подбирать арматуру по теории Вуда</span>
<div style="left:1206px;top:173px;width:11px;height:11px;border:1px solid #cccccc;background:#fff"></div>
<span class="t" style="left:1222px;top:174px;color:#8d8d8d">Учитывать огнестойкость</span>
<div style="left:1374px;top:170px;width:25px;height:21px;background:#c8c8c8"></div>
<svg style="left:1377px;top:172px" width="19" height="18"><defs><linearGradient id="gfire" x1="0" y1="0" x2="0" y2="1"><stop offset="0" stop-color="#e07838"/><stop offset="1" stop-color="#f0a060"/></linearGradient></defs><path d="M9,0.5 C10,3 12.5,4 14,6 C15,4.5 15,3.5 15,3 C17,5.5 18,8.5 17.5,11.5 C17,15 14,17 9.5,17 C5,17 2,15 1.5,11.5 C1,9 2,6.5 3.5,5 C3.5,6.5 4,7.5 5,8 C5,5 7,3 9,0.5 Z" fill="url(#gfire)"/><path d="M9.5,7 C11,9.5 13.5,10.5 13.5,13 C13.5,15.5 11.5,16.5 9.5,16.5 C7,16.5 5.5,15 5.5,13 C5.5,11 7,10.5 7.5,9.5 C8,10.5 8.5,11 9,11 C9,9.5 9,8.5 9.5,7 Z" fill="#f8e090"/></svg>
<div style="left:1206px;top:191px;width:11px;height:11px;border:1px solid #333333;background:#fff"></div>
<span class="t" style="left:1222px;top:191px;">Подбирать поперечную арматуру на 1 кв.м.</span>
<div style="left:1202px;top:214px;width:136px;height:54px;border:1px solid #dcdcdc;box-shadow:inset 1px 1px 0 #f7f7f7"></div>
<div style="left:1213px;top:208px;width:111px;height:12px;background:#f0f0f0"></div>
<span class="t" style="left:1216px;top:209px;">Точность расчета, %</span>
<span class="t" style="left:1211px;top:230px;color:#8d8d8d">Предварит.</span>
<span class="t" style="left:1211px;top:251px;color:#8d8d8d">Основного</span>
<div style="left:1286px;top:226px;width:42px;height:18px;border:1px solid #dadada;background:#f0f0f0;box-shadow:inset 1px 1px 0 #fff,inset -1px -1px 0 #fff"></div>
<span class="t" style="left:1292px;top:230px;color:#8d8d8d">20</span>
<div style="left:1286px;top:248px;width:42px;height:18px;border:1px solid #dadada;background:#f0f0f0;box-shadow:inset 1px 1px 0 #fff,inset -1px -1px 0 #fff"></div>
<span class="t" style="left:1292px;top:252px;color:#8d8d8d">1</span>
<div style="left:1343px;top:214px;width:103px;height:54px;border:1px solid #dcdcdc;box-shadow:inset 1px 1px 0 #f7f7f7"></div>
<div style="left:1352px;top:208px;width:88px;height:12px;background:#f0f0f0"></div>
<span class="t" style="left:1356px;top:209px;">% армирования</span>
<span class="t" style="left:1356px;top:228px;">MIN</span>
<span class="t" style="left:1356px;top:250px;">MAX</span>
<div style="left:1388px;top:226px;width:42px;height:18px;border:1px solid #7a7a7a;background:#fff"></div>
<span class="t" style="left:1394px;top:230px;">0.05</span>
<div style="left:1388px;top:247px;width:42px;height:18px;border:1px solid #0078d7;background:#fff"></div>
<div style="left:1394px;top:250px;width:12px;height:13px;background:#0078d7"></div>
<span class="t" style="left:1394px;top:252px;color:#fff">10</span>
<div style="left:1406px;top:250px;width:1px;height:13px;background:#d08030"></div>
<div style="left:1197px;top:279px;width:253px;height:29px;border:1px solid #dcdcdc;box-shadow:inset 1px 1px 0 #f7f7f7"></div>
<div style="left:1200px;top:273px;width:249px;height:12px;background:#f0f0f0"></div>
<span class="t" style="left:1202px;top:275px;">Диапазон коэффициентов несущей способности</span>
<span class="t" style="left:1245px;top:293px;">MIN</span>
<div style="left:1280px;top:289px;width:37px;height:18px;border:1px solid #7a7a7a;background:#fff"></div>
<span class="t" style="left:1286px;top:293px;">0.9</span>
<span class="t" style="left:1336px;top:293px;">MAX</span>
<div style="left:1374px;top:289px;width:37px;height:18px;border:1px solid #7a7a7a;background:#fff"></div>
<span class="t" style="left:1380px;top:293px;">1.5</span>
<div style="left:1198px;top:320px;width:251px;height:58px;border:1px solid #dcdcdc;box-shadow:inset 1px 1px 0 #f7f7f7"></div>
<div style="left:1250px;top:314px;width:148px;height:12px;background:#f0f0f0"></div>
<span class="t" style="left:1253px;top:315px;">Расстояние к ц.т. арматуры</span>
<svg style="left:1204px;top:328px" width="44" height="50"><rect x="2.5" y="2.5" width="38" height="22" fill="#fff" stroke="#d4d4d4"/><rect x="2.5" y="26.5" width="38" height="22" fill="#fff" stroke="#d4d4d4"/><path d="M16.5,4.5 L20,4.5 L30,11.5 L35.5,16.5 L39,22.5 L16.5,22.5 Z" fill="#c0c0c0" stroke="#000" stroke-width="1.2"/><path d="M7.5,15 V22.5 H39 M7.5,15.5 H20" fill="none" stroke="#000" stroke-width="1.1"/><rect x="20" y="13" width="5" height="5" fill="#0000ff"/><text x="3.5" y="12.6" font-family="Liberation Sans" font-size="10.5" fill="#000">a1</text><path d="M16.5,28.5 L39,28.5 L35.5,34 L30,39 L20,46 L16.5,46 Z" fill="#c0c0c0" stroke="#000" stroke-width="1.2"/><path d="M39,28.5 H7.5 V36 M7.5,35.5 H20" fill="none" stroke="#000" stroke-width="1.1"/><rect x="20" y="33" width="5" height="5" fill="#0000ff"/><text x="3.5" y="45.6" font-family="Liberation Sans" font-size="10.5" fill="#000">a2</text></svg>
<span class="t" style="left:1256px;top:337px;">A1X</span>
<div style="left:1280px;top:331px;width:34px;height:18px;border:1px solid #7a7a7a;background:#fff"></div>
<span class="t" style="left:1286px;top:335px;">10</span>
<span class="t" style="left:1320px;top:337px;">см</span>
<span class="t" style="left:1347px;top:337px;">A1Y</span>
<div style="left:1374px;top:331px;width:34px;height:18px;border:1px solid #7a7a7a;background:#fff"></div>
<span class="t" style="left:1380px;top:335px;">10</span>
<span class="t" style="left:1415px;top:337px;">см</span>
<span class="t" style="left:1256px;top:360px;">A2X</span>
<div style="left:1280px;top:356px;width:34px;height:18px;border:1px solid #7a7a7a;background:#fff"></div>
<span class="t" style="left:1286px;top:359px;">10</span>
<span class="t" style="left:1320px;top:360px;">см</span>
<span class="t" style="left:1347px;top:360px;">A2Y</span>
<div style="left:1374px;top:356px;width:34px;height:18px;border:1px solid #7a7a7a;background:#fff"></div>
<span class="t" style="left:1380px;top:359px;">10</span>
<span class="t" style="left:1415px;top:360px;">см</span>
<div style="left:1193px;top:310px;width:253px;height:63px;border:5px solid #ed1c24"></div>
<div style="left:1197px;top:389px;width:253px;height:34px;border:1px solid #dcdcdc;box-shadow:inset 1px 1px 0 #f7f7f7"></div>
<div style="left:1214px;top:383px;width:220px;height:12px;background:#f0f0f0"></div>
<span class="t" style="left:1219px;top:383px;">Арматура для расчета на продавливание</span>
<span class="t" style="left:1206px;top:404px;color:#8d8d8d">Ax</span>
<div style="left:1224px;top:400px;width:36px;height:18px;border:1px solid #dadada;background:#f0f0f0;box-shadow:inset 1px 1px 0 #fff,inset -1px -1px 0 #fff"></div>
<span class="t" style="left:1230px;top:404px;color:#8d8d8d">0</span>
<span class="t" style="left:1272px;top:404px;color:#8d8d8d">Ay</span>
<div style="left:1293px;top:400px;width:36px;height:18px;border:1px solid #dadada;background:#f0f0f0;box-shadow:inset 1px 1px 0 #fff,inset -1px -1px 0 #fff"></div>
<span class="t" style="left:1299px;top:404px;color:#8d8d8d">0</span>
<div style="left:1338px;top:404px;width:11px;height:11px;border:1px solid #bcbcbc;border-radius:50%;background:#fff"></div>
<div style="left:1341px;top:407px;width:7px;height:7px;border-radius:50%;background:#bcbcbc"></div>
<span class="t" style="left:1355px;top:405px;color:#8d8d8d">%</span>
<div style="left:1377px;top:404px;width:11px;height:11px;border:1px solid #bcbcbc;border-radius:50%;background:#fff"></div>
<span class="t" style="left:1393px;top:405px;color:#8d8d8d">см2</span>
<div style="left:1197px;top:427px;width:253px;height:107px;border:1px solid #dcdcdc;box-shadow:inset 1px 1px 0 #f7f7f7"></div>
<div style="left:1203px;top:432px;width:11px;height:11px;border:1px solid #333333;background:#fff"></div>
<svg style="left:1203px;top:432px" width="13" height="13"><polyline points="2.5,6.5 5,9.5 10.5,3" fill="none" stroke="#333" stroke-width="1.3"/></svg>
<span class="t" style="left:1219px;top:433px;">Расчет по предельным состояниям II группы</span>
<span class="t" style="left:1203px;top:448px;">Трещина продолжительного</span>
<span class="t" style="left:1203px;top:461px;">раскрытия, мм</span>
<span class="t" style="left:1203px;top:474px;">Трещина непродолжительного</span>
<span class="t" style="left:1203px;top:487px;">раскрытия, мм</span>
<div style="left:1407px;top:450px;width:37px;height:18px;border:1px solid #7a7a7a;background:#fff"></div>
<span class="t" style="left:1413px;top:454px;">0.3</span>
<div style="left:1407px;top:478px;width:37px;height:18px;border:1px solid #7a7a7a;background:#fff"></div>
<span class="t" style="left:1413px;top:482px;">0.4</span>
<div style="left:1202px;top:501px;width:11px;height:11px;border:1px solid #333333;border-radius:50%;background:#fff"></div>
<div style="left:1205px;top:504px;width:7px;height:7px;border-radius:50%;background:#333333"></div>
<span class="t" style="left:1218px;top:502px;">Шаг арматурных стержней, мм</span>
<div style="left:1202px;top:519px;width:11px;height:11px;border:1px solid #333333;border-radius:50%;background:#fff"></div>
<span class="t" style="left:1218px;top:520px;">Диаметр арматурных стержней</span>
<div style="left:1394px;top:509px;width:51px;height:19px;border:1px solid #adadad;background:#e1e1e1"></div>
<span class="t" style="left:1399px;top:514px;">100</span>
<svg style="left:1434px;top:516px" width="10" height="6"><path d="M0.5,0.5 L5,5 L9.5,0.5" fill="none" stroke="#444" stroke-width="1"/></svg>
<div style="left:1197px;top:542px;width:253px;height:84px;border:1px solid #dcdcdc;box-shadow:inset 1px 1px 0 #f7f7f7"></div>
<div style="left:1205px;top:547px;width:11px;height:11px;border:1px solid #333333;background:#fff"></div>
<span class="t" style="left:1221px;top:548px;">Учитывать расчетную высоту стены</span>
<span class="t" style="left:1205px;top:565px;color:#8d8d8d">Высота стены</span>
<div style="left:1206px;top:582px;width:40px;height:18px;border:1px solid #dadada;background:#f0f0f0;box-shadow:inset 1px 1px 0 #fff,inset -1px -1px 0 #fff"></div>
<span class="t" style="left:1212px;top:586px;color:#8d8d8d">1</span>
<span class="t" style="left:1254px;top:586px;color:#8d8d8d">м</span>
<div style="left:1289px;top:564px;width:11px;height:11px;border:1px solid #bcbcbc;border-radius:50%;background:#fff"></div>
<span class="t" style="left:1305px;top:565px;color:#8d8d8d">Расчетная высота</span>
<div style="left:1289px;top:583px;width:11px;height:11px;border:1px solid #bcbcbc;border-radius:50%;background:#fff"></div>
<div style="left:1292px;top:586px;width:7px;height:7px;border-radius:50%;background:#bcbcbc"></div>
<span class="t" style="left:1305px;top:584px;color:#8d8d8d">Коэффициент</span>
<div style="left:1389px;top:580px;width:35px;height:18px;border:1px solid #dadada;background:#f0f0f0;box-shadow:inset 1px 1px 0 #fff,inset -1px -1px 0 #fff"></div>
<span class="t" style="left:1395px;top:584px;color:#8d8d8d">1</span>
<span class="t" style="left:1205px;top:607px;color:#8d8d8d">Армирование</span>
<div style="left:1305px;top:603px;width:139px;height:19px;border:1px solid #bfbfbf;background:#cccccc"></div>
<span class="t" style="left:1309px;top:608px;color:#8d8d8d">Несимметричное</span>
<svg style="left:1433px;top:610px" width="10" height="6"><path d="M0.5,0.5 L5,5 L9.5,0.5" fill="none" stroke="#9a9a9a" stroke-width="1"/></svg>
<div style="left:1019px;top:588px;width:205px;height:21px;background:rgba(190,215,240,0.22)"></div>
<div style="left:1026px;top:595px;width:7px;height:7px;border-radius:50%;background:rgba(160,160,160,0.25)"></div>
<span class="t" style="left:1051px;top:591px;font-size:13px;color:rgba(150,150,150,0.35)">Окно</span>
</body></html>
